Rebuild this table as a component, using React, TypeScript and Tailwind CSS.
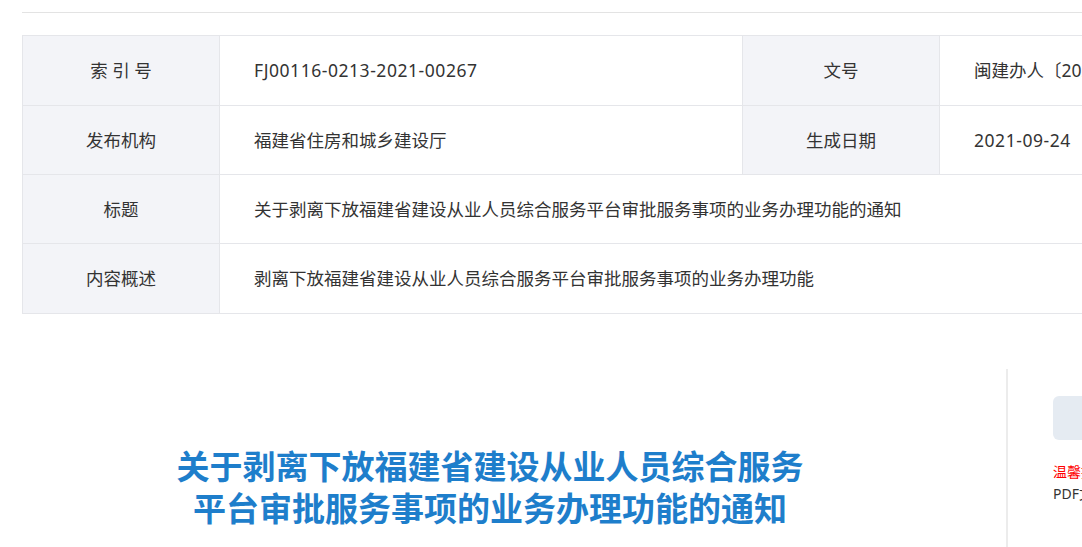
import React from "react";

const font = { fontFamily: '"Noto Sans", "Noto Sans CJK SC", sans-serif' };

function Label({ children }: { children: React.ReactNode }) {
  return (
    <div className="flex items-center justify-center bg-[#f3f4f8] border-r border-[#e5e6ea] text-[17.5px] text-[#333]">
      {children}
    </div>
  );
}

function Value({
  children,
  last,
  latin,
}: {
  children: React.ReactNode;
  last?: boolean;
  latin?: boolean;
}) {
  return (
    <div
      className={
        "flex items-center pl-[34px] text-[17.5px] text-[#333] whitespace-nowrap " +
        (latin ? "tracking-[0.55px] " : "") +
        (last ? "" : "border-r border-[#e5e6ea]")
      }
    >
      {children}
    </div>
  );
}

export default function App() {
  return (
    <div className="w-[1082px] h-[547px] overflow-hidden bg-white" style={font}>
      <div className="ml-[22px] w-[1200px]">
        <div className="h-[13px] border-b border-[#e3e3e3]" />
        <div className="mt-[22px] border-t border-l border-[#e5e6ea]">
          <div className="grid grid-cols-[197px_523px_197px_1fr] h-[70px] border-b border-[#e5e6ea]">
            <Label>索 引 号</Label>
            <Value latin>FJ00116-0213-2021-00267</Value>
            <Label>文号</Label>
            <Value last>闽建办人〔2021〕9号</Value>
          </div>
          <div className="grid grid-cols-[197px_523px_197px_1fr] h-[69px] border-b border-[#e5e6ea]">
            <Label>发布机构</Label>
            <Value>福建省住房和城乡建设厅</Value>
            <Label>生成日期</Label>
            <Value last latin>2021-09-24</Value>
          </div>
          <div className="grid grid-cols-[197px_1fr] h-[69px] border-b border-[#e5e6ea]">
            <Label>标题</Label>
            <Value last>关于剥离下放福建省建设从业人员综合服务平台审批服务事项的业务办理功能的通知</Value>
          </div>
          <div className="grid grid-cols-[197px_1fr] h-[70px] border-b border-[#e5e6ea]">
            <Label>内容概述</Label>
            <Value last>剥离下放福建省建设从业人员综合服务平台审批服务事项的业务办理功能</Value>
          </div>
        </div>

        <div className="mt-[55px] flex">
          <div className="w-[984px] pr-[48px] pt-[77px]">
            <h1 className="text-center text-[33px] leading-[42px] font-bold text-[#1e7ecb]">
              关于剥离下放福建省建设从业人员综合服务
              <br />
              平台审批服务事项的业务办理功能的通知
            </h1>
          </div>
          <div className="border-l-2 border-[#ececec] pl-[45px] pt-[27px] h-[200px]">
            <div className="w-[150px] h-[44px] rounded-md bg-[#e5ebf2]" />
            <div className="mt-[20px] text-[14px] leading-[24px] text-[#ff0000] whitespace-nowrap">温馨提示：</div>
            <div className="text-[14px] leading-[20px] text-[#333] whitespace-nowrap">PDF文件</div>
          </div>
        </div>
      </div>
    </div>
  );
}
